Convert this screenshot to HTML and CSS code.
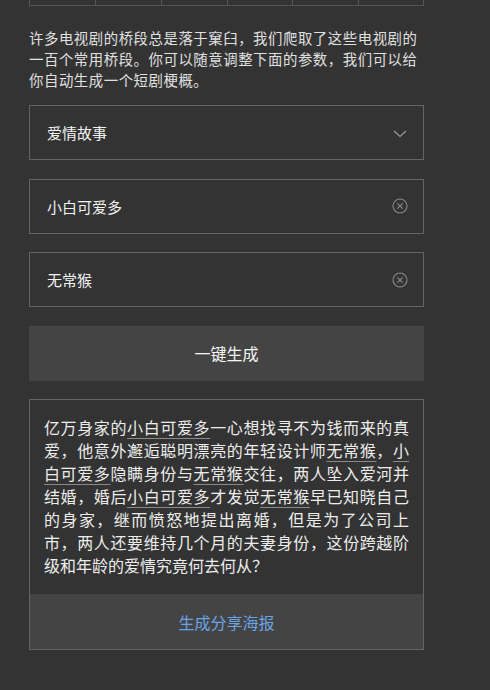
FILE: index.html
```html
<!DOCTYPE html>
<html lang="zh-CN">
<head>
<meta charset="utf-8">
<title>短剧梗概生成</title>
<link rel="stylesheet" href="styles.css">
</head>
<body>
<div class="page">
  <div class="grid-tail">
    <div class="cell"></div><div class="cell"></div><div class="cell"></div>
    <div class="cell"></div><div class="cell"></div><div class="cell"></div>
  </div>

  <p class="intro">许多电视剧的桥段总是落于窠臼，我们爬取了这些电视剧的一百个常用桥段。你可以随意调整下面的参数，我们可以给你自动生成一个短剧梗概。</p>

  <div class="form">
    <div class="field">
      <span class="value">爱情故事</span>
      <svg class="icon" viewBox="0 0 16 16" width="16" height="16"><path d="M2 6 L8 11.5 L14 6" fill="none" stroke="#9a9a9a" stroke-width="1.2"/></svg>
    </div>
    <div class="field">
      <span class="value">小白可爱多</span>
      <svg class="icon" viewBox="0 0 16 16" width="16" height="16"><circle cx="8" cy="8" r="7" fill="none" stroke="#8a8a8a" stroke-width="1.1"/><path d="M5.3 5.3 L10.7 10.7 M10.7 5.3 L5.3 10.7" stroke="#8a8a8a" stroke-width="1.1"/></svg>
    </div>
    <div class="field">
      <span class="value">无常猴</span>
      <svg class="icon" viewBox="0 0 16 16" width="16" height="16"><circle cx="8" cy="8" r="7" fill="none" stroke="#8a8a8a" stroke-width="1.1"/><path d="M5.3 5.3 L10.7 10.7 M10.7 5.3 L5.3 10.7" stroke="#8a8a8a" stroke-width="1.1"/></svg>
    </div>
    <div class="btn">一键生成</div>

    <div class="result">
      <p class="story">亿万身家的<span class="name">小白可爱多</span>一心想找寻不为钱而来的真爱，他意外邂逅聪明漂亮的年轻设计师<span class="name">无常猴</span>，<span class="name">小白可爱多</span>隐瞒身份与<span class="name">无常猴</span>交往，两人坠入爱河并结婚，婚后<span class="name">小白可爱多</span>才发觉<span class="name">无常猴</span>早已知晓自己的身家，继而愤怒地提出离婚，但是为了公司上市，两人还要维持几个月的夫妻身份，这份跨越阶级和年龄的爱情究竟何去何从？</p>
      <div class="share">生成分享海报</div>
    </div>
  </div>
</div>
</body>
</html>
```

FILE: styles.css
```css
html, body {
  margin: 0;
  padding: 0;
  background: #333333;
}
body {
  font-family: "Microsoft YaHei", "Noto Sans CJK SC", "Noto Sans", sans-serif;
  color: #e8e8e8;
  text-spacing-trim: space-all;
}
.page {
  width: 395px;
  margin-left: 29px;
}
.grid-tail {
  display: grid;
  grid-template-columns: repeat(6, 1fr);
  height: 6px;
  border-bottom: 1px solid #565656;
  box-sizing: border-box;
}
.cell {
  border-left: 1px solid #565656;
}
.cell:last-child {
  border-right: 1px solid #565656;
}
.intro {
  margin: 21px 0 0 0;
  font-size: 14.4px;
  letter-spacing: 0.55px;
  line-height: 21px;
  color: #e0e0e0;
}
.form {
  display: flex;
  flex-direction: column;
  gap: 18.5px;
  margin-top: 15px;
}
.field {
  height: 55px;
  box-sizing: border-box;
  border: 1px solid #646464;
  display: flex;
  align-items: center;
  justify-content: space-between;
  padding: 0 15px 0 17px;
}
.value {
  font-size: 15px;
  color: #f2f2f2;
}
.icon {
  display: block;
}
.btn {
  height: 55px;
  background: #444444;
  display: flex;
  align-items: center;
  justify-content: center;
  font-size: 16px;
  color: #f5f5f5;
}
.result {
  border: 1px solid #646464;
}
.story {
  margin: 0;
  padding: 16px 14px 17px 14px;
  font-size: 16px;
  line-height: 23px;
  text-align: justify;
  color: #ededed;
}
.name {
  text-decoration: underline;
  text-decoration-color: #8a8a8a;
  text-decoration-thickness: 1px;
  text-underline-offset: 4px;
}
.share {
  height: 55px;
  background: #444444;
  display: flex;
  align-items: center;
  justify-content: center;
  font-size: 16px;
  color: #6aa3e6;
}
```
